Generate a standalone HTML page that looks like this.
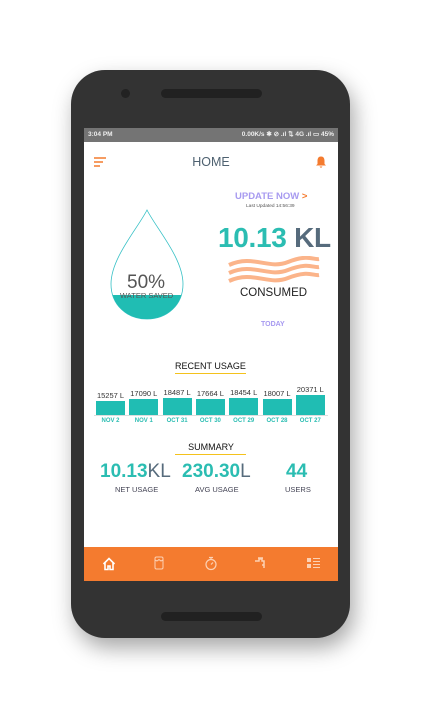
<!DOCTYPE html>
<html><head><meta charset="utf-8"><style>
*{margin:0;padding:0;box-sizing:border-box}
body{width:423px;height:710px;background:#fff;position:relative;overflow:hidden;font-family:"Liberation Sans",Roboto,sans-serif}
.phone{position:absolute;left:71px;top:70px;width:279px;height:568px;background:#333;border-radius:34px;box-shadow:4px 10px 22px rgba(0,0,0,.35)}
.spk{position:absolute;left:161px;width:101px;height:9px;background:#212121;border-radius:5px}
.cam{position:absolute;left:121px;top:89px;width:9px;height:9px;border-radius:50%;background:#222}
.screen{position:absolute;left:84px;top:128px;width:254px;height:453px;background:#fff;overflow:hidden}
.status{position:absolute;left:0;top:0;width:254px;height:14px;background:#747474;color:#eee;font-size:6.5px;font-weight:bold;line-height:14px;padding:0 4px}
.abs{position:absolute;white-space:nowrap}
.nav{position:absolute;left:0;top:419px;width:254px;height:34px;background:#f47b2f}
</style></head><body>
<div class="phone"></div>
<div class="cam"></div>
<div class="spk" style="top:89px"></div>
<div class="spk" style="top:612px"></div>
<div class="screen">
 <div class="status">3:04 PM<span style="float:right">0.00K/s ✱ ⊘ .ıl ⇅ 4G .ıl ▭ 45%</span></div>
 <svg class="abs" style="left:10px;top:29px" width="12" height="10"><path d="M0 1H12M0 5H9M0 9H6" stroke="#f47b2f" stroke-width="1.6"/></svg>
 <div class="abs" style="left:0;width:254px;text-align:center;top:27px;font-size:12.5px;color:#4e6170">HOME</div>
 <svg class="abs" style="left:231px;top:28px" width="12" height="12"><path d="M6 0.5C3 0.5 2.5 3 2.5 5V8L1 9.5H11L9.5 8V5C9.5 3 9 .5 6 .5Z M4.5 10.5H7.5L6 12Z" fill="#f47b2f"/></svg>
 <div class="abs" style="left:151px;top:63px;font-size:9.5px;font-weight:bold;color:#a79af0">UPDATE NOW <span style="color:#f47b2f">&gt;</span></div>
 <div class="abs" style="left:162px;top:76px;font-size:4.8px;color:#555">Last Updated 14:56:39</div>
 <div class="abs" style="left:134px;top:94px;font-size:28px;font-weight:bold;color:#2bbdb2;letter-spacing:-0.3px">10.13 <span style="color:#566b7c">KL</span></div>
 <svg class="abs" style="left:144px;top:128px" width="92" height="28"><path d="M1 9C25 -2 40 14 60 6S85 4 91 3M1 17C25 6 40 22 60 14S85 12 91 11M1 25C25 14 40 30 60 22S85 20 91 19" fill="none" stroke="#fbb48a" stroke-width="4"/></svg>
 <div class="abs" style="left:156px;top:159px;font-size:11.5px;color:#222">CONSUMED</div>
 <div class="abs" style="left:177px;top:193px;font-size:7px;font-weight:bold;color:#a79af0">TODAY</div>
 <svg class="abs" style="left:24px;top:80px" width="80" height="115">
  <defs><clipPath id="c"><rect x="0" y="87" width="80" height="40"/></clipPath></defs>
  <path d="M39 2C30 20 3 50 3 76C3 97 19 111 39 111C59 111 75 97 75 76C75 50 48 20 39 2Z" fill="#fff" stroke="#36c0c5" stroke-width="0.8"/>
  <path d="M39 2C30 20 3 50 3 76C3 97 19 111 39 111C59 111 75 97 75 76C75 50 48 20 39 2Z" fill="#20bdb3" clip-path="url(#c)"/>
 </svg>
 <div class="abs" style="left:43px;top:144px;font-size:19px;color:#555">50%</div>
 <div class="abs" style="left:36px;top:163px;font-size:7.5px;color:#555">WATER SAVED</div>
 <div class="abs" style="left:91px;top:233px;font-size:9px;color:#111">RECENT USAGE</div>
 <div class="abs" style="left:91px;top:245px;width:71px;height:1px;background:#f4c21c"></div>
 <div class="abs" style="left:10px;top:287px;width:234px;height:1px;background:#ddd"></div>
 <div id="bars"></div>
 <div class="abs" style="left:0;width:254px;text-align:center;top:314px;font-size:9px;color:#111">SUMMARY</div>
 <div class="abs" style="left:91px;top:326px;width:71px;height:1px;background:#f4c21c"></div>
 <div class="abs" style="left:16px;top:333px;font-size:19px;font-weight:bold;color:#2bbdb2">10.13<span style="font-weight:normal;color:#566b7c">KL</span></div>
 <div class="abs" style="left:31px;top:357px;font-size:7.5px;color:#445">NET USAGE</div>
 <div class="abs" style="left:98px;top:333px;font-size:19px;font-weight:bold;color:#2bbdb2">230.30<span style="font-weight:normal;color:#566b7c">L</span></div>
 <div class="abs" style="left:111px;top:357px;font-size:7.5px;color:#445">AVG USAGE</div>
 <div class="abs" style="left:202px;top:333px;font-size:19px;font-weight:bold;color:#2bbdb2">44</div>
 <div class="abs" style="left:201px;top:357px;font-size:7.5px;color:#445">USERS</div>
 <div class="nav">
  <svg class="abs" style="left:18px;top:10px" width="14" height="14"><path d="M1.5 7L7 1.5L12.5 7M3 6V12.5H6V9H8V12.5H11V6" fill="none" stroke="#fff" stroke-width="1.6"/></svg>
  <svg class="abs" style="left:70px;top:9px" width="10" height="14"><rect x="1" y="1" width="8" height="12" rx="1.5" fill="none" stroke="#fcd1b4" stroke-width="1"/><path d="M1 4L3 5L5 3.5L7 5L9 4" fill="none" stroke="#fcd1b4"/></svg>
  <svg class="abs" style="left:120px;top:9px" width="14" height="15"><circle cx="7" cy="8.5" r="5" fill="none" stroke="#fcd1b4" stroke-width="1.2"/><path d="M5 1.5H9M7 1.5V3.5M7 8.5L9 6.5" stroke="#fcd1b4" stroke-width="1.2"/></svg>
  <svg class="abs" style="left:170px;top:9px" width="14" height="15"><path d="M1 5H5V3H8V5H10V9H8M4 2H9M10 9V12" fill="none" stroke="#fcd1b4" stroke-width="1.5"/></svg>
  <svg class="abs" style="left:223px;top:11px" width="13" height="11"><rect x="0" y="0" width="4" height="4" fill="#fcd1b4"/><rect x="0" y="6" width="4" height="4" fill="#fcd1b4"/><path d="M6 .5H13M6 3.5H13M6 6.5H13M6 9.5H13" stroke="#fcd1b4"/></svg>
 </div>
</div>
<script>
var v=["15257 L","17090 L","18487 L","17664 L","18454 L","18007 L","20371 L"],d=["NOV 2","NOV 1","OCT 31","OCT 30","OCT 29","OCT 28","OCT 27"],t=[273,271,270,271,270,271,267],h="";
for(var i=0;i<7;i++){var x=12+i*33.3;h+='<div class="abs" style="left:'+x+'px;top:'+t[i]+'px;width:29px;height:'+(287-t[i])+'px;background:#20bdb3"></div>';
h+='<div class="abs" style="left:'+(x-3)+'px;width:35px;text-align:center;top:'+(t[i]-10)+'px;font-size:7.5px;color:#333">'+v[i]+'</div>';
h+='<div class="abs" style="left:'+(x-3)+'px;width:35px;text-align:center;top:290px;font-size:6px;font-weight:bold;color:#2bbdb2">'+d[i]+'</div>';}
document.getElementById('bars').outerHTML=h;
</script>
</body></html>
